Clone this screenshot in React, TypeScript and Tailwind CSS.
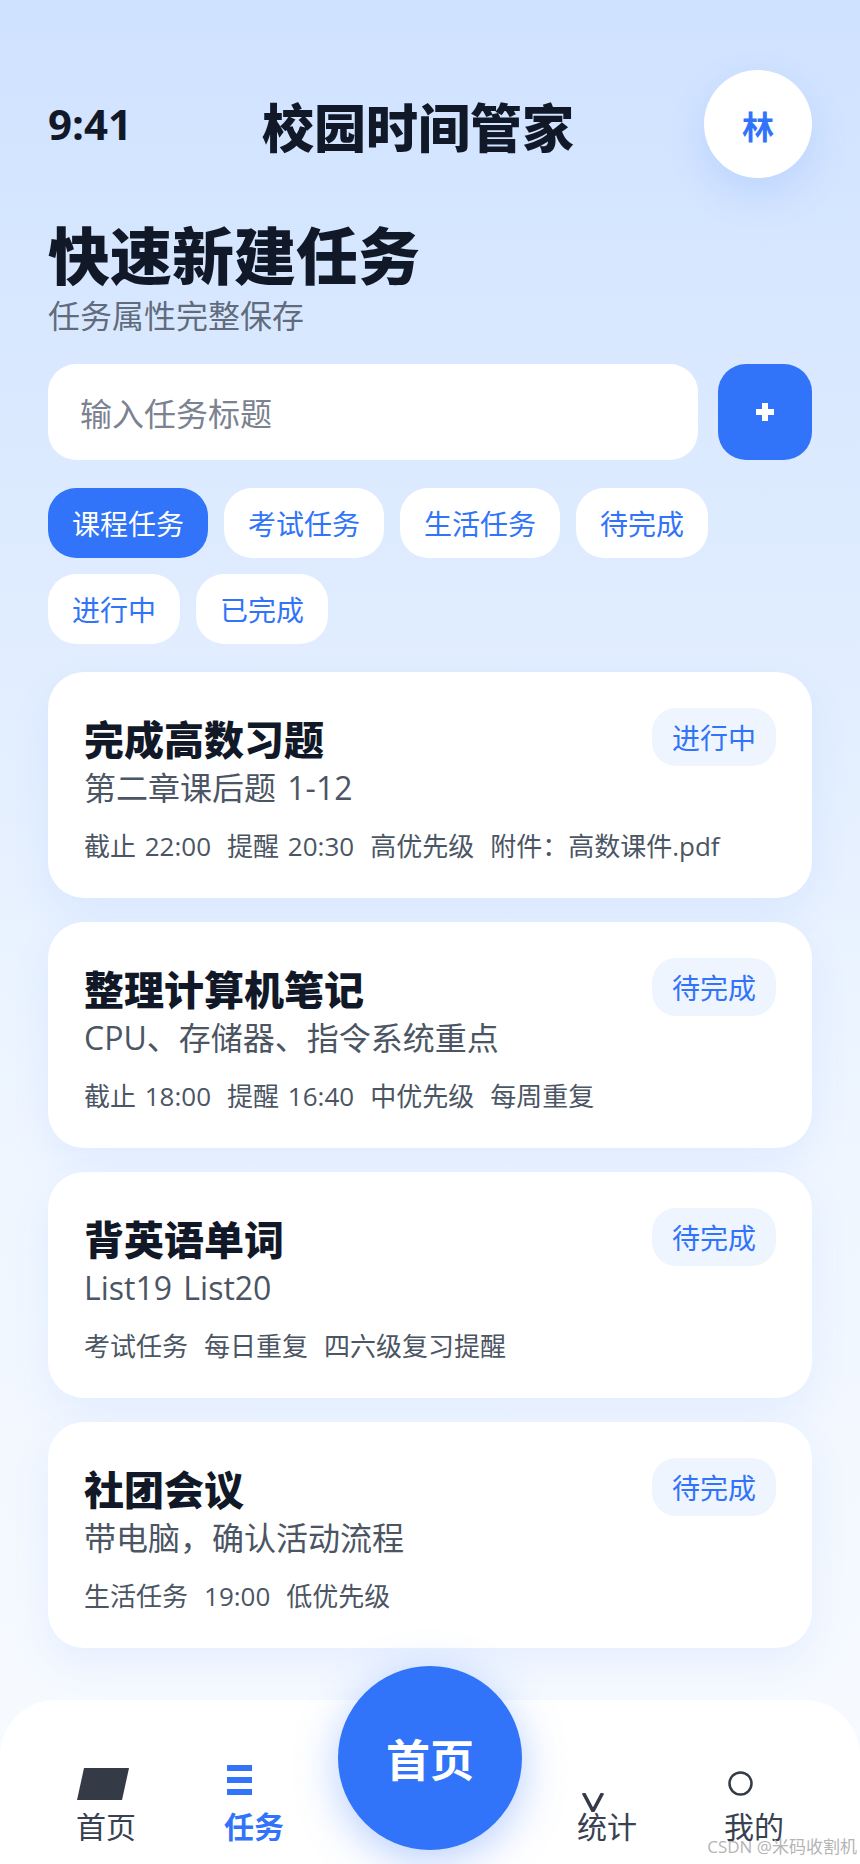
import React from 'react';

const chips = ['课程任务', '考试任务', '生活任务', '待完成', '进行中', '已完成'];

const tasks = [
  { title: '完成高数习题', status: '进行中', desc: '第二章课后题 1-12', meta: ['截止 22:00', '提醒 20:30', '高优先级', '附件：高数课件.pdf'] },
  { title: '整理计算机笔记', status: '待完成', desc: 'CPU、存储器、指令系统重点', meta: ['截止 18:00', '提醒 16:40', '中优先级', '每周重复'] },
  { title: '背英语单词', status: '待完成', desc: 'List19 List20', meta: ['考试任务', '每日重复', '四六级复习提醒'] },
  { title: '社团会议', status: '待完成', desc: '带电脑，确认活动流程', meta: ['生活任务', '19:00', '低优先级'] },
];

const TaskCard = ({ task }: { task: (typeof tasks)[number] }) => (
  <div className="h-[226px] rounded-[36px] bg-white px-[36px] pt-[36px] shadow-[0_16px_40px_rgba(49,116,249,0.08)]">
    <div className="flex items-start justify-between">
      <div className="pt-[7px] text-[40px] font-black leading-[50px] text-[#111827]">{task.title}</div>
      <div className="flex h-[58px] w-[124px] items-center justify-center rounded-[24px] bg-[#eff5ff] pt-[2px] text-[28px] text-[#3174f9]">{task.status}</div>
    </div>
    <div className="text-[32px] leading-[44px] text-[#4b5563] [word-spacing:3px]">{task.desc}</div>
    <div className="mt-[18px] flex gap-[16px] text-[26px] leading-[36px] text-[#4b5563] [word-spacing:2px]">
      {task.meta.map((item) => (
        <span key={item}>{item}</span>
      ))}
    </div>
  </div>
);

export default function App() {
  return (
    <div
      className="relative flex min-h-[1864px] w-[860px] flex-col overflow-hidden bg-gradient-to-b from-[#cfe2ff] via-[#eff6ff] via-62% to-[#f8fbff]"
      style={{ fontFamily: '"Open Sans", "Noto Sans CJK SC", sans-serif' }}
    >
      <main className="flex-1 px-[48px] pt-[70px]">
        <header className="flex items-center justify-between">
          <span className="text-[42px] font-bold leading-[50px] text-[#111827]">9:41</span>
          <span className="mt-[7px] text-[52px] font-black leading-[66px] text-[#111827]">校园时间管家</span>
          <div className="flex h-[108px] w-[108px] items-center justify-center rounded-full bg-white pt-[6px] text-[32px] font-bold text-[#3174f9] shadow-[0_16px_40px_rgba(49,116,249,0.14)]">
            林
          </div>
        </header>

        <h1 className="mt-[40px] text-[62px] font-black leading-[76px] text-[#111827]">快速新建任务</h1>
        <p className="mt-[1px] text-[32px] leading-[42px] text-[#4b5563]/85">任务属性完整保存</p>

        <div className="mt-[27px] flex gap-[20px]">
          <div className="flex h-[96px] flex-1 items-center rounded-[28px] bg-white pl-[32px] pt-[4px] text-[32px] text-[#7b8290]">输入任务标题</div>
          <button className="flex h-[96px] w-[94px] items-center justify-center rounded-[28px] bg-[#3174f9]">
            <svg width="18" height="18" viewBox="0 0 18 18" fill="#fff">
              <path d="M6 0h6v6h6v6h-6v6H6v-6H0V6h6z" />
            </svg>
          </button>
        </div>

        <div className="mt-[28px] flex flex-wrap gap-[16px]">
          {chips.map((chip, i) => (
            <span
              key={chip}
              className={`flex h-[70px] items-center rounded-[28px] px-[24px] pt-[2px] text-[28px] ${
                i === 0 ? 'bg-[#3174f9] text-white' : 'bg-white text-[#3174f9]'
              }`}
            >
              {chip}
            </span>
          ))}
        </div>

        <div className="mt-[28px] flex flex-col gap-[24px]">
          {tasks.map((task) => (
            <TaskCard key={task.title} task={task} />
          ))}
        </div>
      </main>

      <nav className="relative flex h-[164px] justify-between rounded-t-[56px] bg-white px-[76px] pb-[18px]">
        <div className="flex items-end gap-[88px]">
          <NavItem label="首页">
            <svg className="mb-[8px] ml-[1px]" width="52" height="32" viewBox="0 0 52 32" fill="#343a46">
              <path d="M7 0h45l-7 32H0z" />
            </svg>
          </NavItem>
          <NavItem label="任务" active>
            <svg className="mb-[13px] ml-[3px]" width="25" height="30" viewBox="0 0 25 30" fill="#3174f9">
              <path d="M0 0h25v6H0zM0 12h25v6H0zM0 24h25v6H0z" />
            </svg>
          </NavItem>
        </div>
        <div className="flex items-end gap-[87px]">
          <NavItem label="统计">
            <svg className="-mb-[4px] ml-[5px]" width="22" height="19" viewBox="0 0 22 19" fill="none" stroke="#343a46" strokeWidth="3.5">
              <path d="M1.5 0l9.5 18 9.5-18" />
            </svg>
          </NavItem>
          <NavItem label="我的">
            <svg className="mb-[12px] ml-[4px]" width="25" height="25" viewBox="0 0 25 25" fill="none" stroke="#343a46" strokeWidth="2.5">
              <circle cx="12.5" cy="12.5" r="11" />
            </svg>
          </NavItem>
        </div>
        <button className="absolute left-[338px] top-[-34px] flex h-[184px] w-[184px] items-center justify-center rounded-full bg-[#3174f9] pt-[4px] text-[44px] font-bold text-white shadow-[0_10px_44px_rgba(49,116,249,0.35)]">
          首页
        </button>
      </nav>

      <span className="absolute bottom-[5px] right-[3px] text-[17px] text-[#b5b5b5]">CSDN @米码收割机</span>
    </div>
  );
}

function NavItem({ label, active, children }: { label: string; active?: boolean; children: React.ReactNode }) {
  return (
    <div className={`flex w-[60px] flex-col ${active ? 'text-[#3174f9]' : 'text-[#374151]'}`}>
      {children}
      <span className={`text-[30px] leading-[38px] ${active ? 'font-bold' : ''}`}>{label}</span>
    </div>
  );
}
